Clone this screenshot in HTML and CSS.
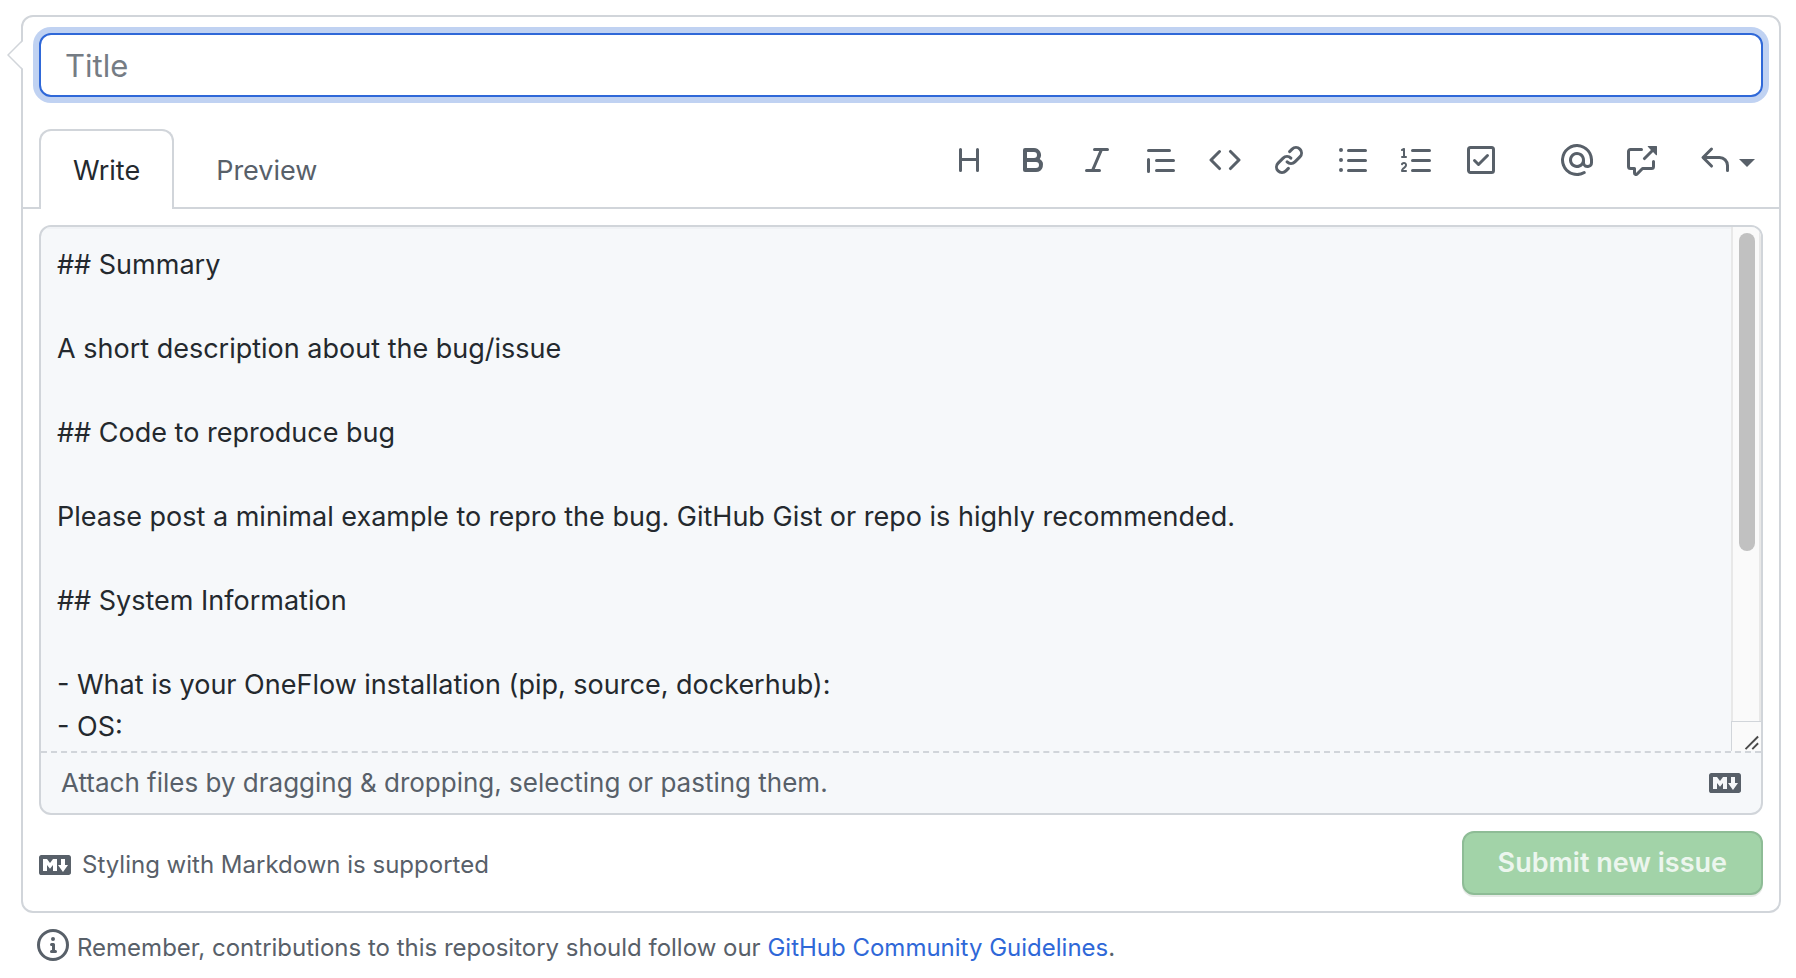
FILE: index.html
```html
<!DOCTYPE html>
<html lang="en">
<head>
<meta charset="utf-8">
<title>New issue</title>
<link rel="stylesheet" href="styles.css">
</head>
<body>
<main class="page">
  <form class="issue-box">
    <svg class="caret-left" viewBox="0 0 16 30" aria-hidden="true"><path class="caret-fill" d="M16 1 1 15l15 14z"/><path class="caret-line" d="M15.500 .5 1 15l14.500 14.500"/></svg>
    <input class="title-input" type="text" placeholder="Title" aria-label="Title">

    <div class="tab-bar">
      <div class="tabs" role="tablist">
        <button class="tab tab-selected" type="button" role="tab" aria-selected="true">Write</button>
        <button class="tab" type="button" role="tab" aria-selected="false">Preview</button>
      </div>
      <div class="toolbar" role="toolbar" aria-label="Formatting">
        <div class="tool-group">
          <button class="tool" type="button" aria-label="Heading"><svg class="icon" viewBox="0 0 16 16"><path d="M3.750 2a.75.75 0 01.75.75V7h7V2.750a.75.75 0 011.500 0v10.500a.75.75 0 01-1.500 0V8.500h-7v4.750a.75.75 0 01-1.500 0V2.750A.75.75 0 013.750 2z"/></svg></button>
          <button class="tool" type="button" aria-label="Bold"><svg class="icon" viewBox="0 0 16 16"><path fill-rule="evenodd" d="M4 2a1 1 0 00-1 1v10a1 1 0 001 1h5.500a3.500 3.500 0 001.852-6.470A3.500 3.500 0 008.500 2H4zm4.500 5a1.500 1.500 0 100-3H5v3h3.500zM5 9v3h4.500a1.500 1.500 0 000-3H5z"/></svg></button>
          <button class="tool" type="button" aria-label="Italic"><svg class="icon" viewBox="0 0 16 16"><path d="M6 2.750A.75.75 0 016.750 2h6.500a.75.75 0 010 1.500h-2.505l-3.858 9H9.250a.75.75 0 010 1.500h-6.500a.75.75 0 010-1.500h2.505l3.858-9H6.750A.75.75 0 016 2.750z"/></svg></button>
          <button class="tool" type="button" aria-label="Quote"><svg class="icon" viewBox="0 0 16 16"><path d="M1.750 2.500a.75.75 0 000 1.500h10.500a.75.75 0 000-1.500H1.750zm4 5a.75.75 0 000 1.500h8.500a.75.75 0 000-1.500h-8.500zm0 5a.75.75 0 000 1.500h8.500a.75.75 0 000-1.500h-8.500zM2.500 7.750a.75.75 0 00-1.500 0v6a.75.75 0 001.500 0v-6z"/></svg></button>
          <button class="tool" type="button" aria-label="Code"><svg class="icon" viewBox="0 0 16 16"><path d="M4.720 3.220a.75.75 0 011.060 1.060L2.060 8l3.720 3.720a.75.75 0 11-1.060 1.060L.47 8.530a.75.75 0 010-1.060l4.250-4.250zm6.560 0a.75.75 0 10-1.060 1.060L13.940 8l-3.720 3.720a.75.75 0 101.060 1.060l4.250-4.250a.75.75 0 000-1.060l-4.250-4.250z"/></svg></button>
          <button class="tool" type="button" aria-label="Link"><svg class="icon" viewBox="0 0 16 16"><path d="M7.775 3.275a.75.75 0 001.060 1.060l1.250-1.250a2 2 0 112.830 2.830l-2.500 2.500a2 2 0 01-2.830 0 .75.75 0 00-1.060 1.060 3.500 3.500 0 004.950 0l2.500-2.500a3.500 3.500 0 00-4.950-4.950l-1.250 1.250zm-4.690 9.640a2 2 0 010-2.830l2.500-2.500a2 2 0 012.830 0 .75.75 0 001.060-1.060 3.500 3.500 0 00-4.950 0l-2.500 2.500a3.500 3.500 0 004.950 4.950l1.250-1.250a.75.75 0 00-1.060-1.060l-1.250 1.250a2 2 0 01-2.830 0z"/></svg></button>
          <button class="tool" type="button" aria-label="Bulleted list"><svg class="icon" viewBox="0 0 16 16"><path d="M2 4a1 1 0 100-2 1 1 0 000 2zm3.750-1.500a.75.75 0 000 1.500h8.500a.75.75 0 000-1.500h-8.500zm0 5a.75.75 0 000 1.500h8.500a.75.75 0 000-1.500h-8.500zm0 5a.75.75 0 000 1.500h8.500a.75.75 0 000-1.500h-8.500zM3 8a1 1 0 11-2 0 1 1 0 012 0zm-1 6a1 1 0 100-2 1 1 0 000 2z"/></svg></button>
          <button class="tool" type="button" aria-label="Numbered list"><svg class="icon" viewBox="0 0 16 16"><path d="M2.003 2.500a.5.5 0 00-.723-.447l-1.003.5a.5.5 0 00.446.895l.28-.14V6H.5a.5.5 0 000 1h2.006a.5.5 0 100-1h-.503V2.500zM5 3.250a.75.75 0 01.75-.75h8.500a.75.75 0 010 1.500h-8.500A.75.75 0 015 3.250zm0 5a.75.75 0 01.75-.75h8.500a.75.75 0 010 1.500h-8.500A.75.75 0 015 8.250zm0 5a.75.75 0 01.75-.75h8.500a.75.75 0 010 1.500h-8.500a.75.75 0 01-.75-.75zM.924 10.320l.003-.004a.851.851 0 01.144-.153A.66.66 0 011.500 10c.195 0 .306.068.374.146a.57.57 0 01.128.376c0 .453-.269.682-.8 1.078l-.035.025C.692 11.980 0 12.495 0 13.500a.5.5 0 00.5.5h2.003a.5.5 0 000-1H1.146c.132-.197.351-.372.654-.597l.047-.035c.47-.35 1.156-.858 1.156-1.845 0-.365-.118-.744-.377-1.038-.268-.303-.658-.484-1.126-.484-.48 0-.84.202-1.068.392a1.858 1.858 0 00-.348.384l-.010.018a.5.5 0 00.851.525z"/></svg></button>
          <button class="tool" type="button" aria-label="Task list"><svg class="icon" viewBox="0 0 16 16"><path fill-rule="evenodd" d="M2.500 2.750a.25.25 0 01.25-.25h10.500a.25.25 0 01.25.25v10.500a.25.25 0 01-.25.25H2.750a.25.25 0 01-.25-.25V2.750zM2.750 1A1.750 1.750 0 001 2.750v10.500c0 .966.784 1.750 1.750 1.750h10.500A1.750 1.750 0 0015 13.250V2.750A1.750 1.750 0 0013.250 1H2.750zm9.030 5.280a.75.75 0 00-1.060-1.060L6.750 9.190 5.280 7.720a.75.75 0 00-1.060 1.060l2 2a.75.75 0 001.060 0l4.500-4.500z"/></svg></button>
        </div>
        <div class="tool-group">
          <button class="tool" type="button" aria-label="Mention"><svg class="icon" viewBox="0 0 16 16"><path fill-rule="evenodd" d="M4.750 2.370a6.500 6.500 0 006.500 11.260.75.75 0 01.75 1.298 8 8 0 113.994-7.273.754.754 0 01.006.095v1.500a2.750 2.750 0 01-5.072 1.475A4 4 0 1112 8v1.250a1.250 1.250 0 002.500 0V7.867a6.500 6.500 0 00-9.750-5.496V2.370zM10.500 8a2.500 2.500 0 10-5 0 2.500 2.500 0 005 0z"/></svg></button>
          <button class="tool" type="button" aria-label="Reference"><svg class="icon" viewBox="0 0 16 16"><path d="M16 1.250v4.146a.25.25 0 01-.427.177L14.030 4.030l-3.750 3.750a.75.75 0 11-1.060-1.060l3.750-3.750-1.543-1.543A.25.25 0 0111.604 1h4.146a.25.25 0 01.25.25zM2.750 3.500a.25.25 0 00-.25.25v7.500c0 .138.112.25.25.25h2a.75.75 0 01.75.75v2.190l2.720-2.720a.75.75 0 01.53-.22h4.500a.25.25 0 00.25-.25v-2.500a.75.75 0 111.500 0v2.500A1.750 1.750 0 0113.250 13H9.060l-2.573 2.573A1.457 1.457 0 014 14.543V13H2.750A1.750 1.750 0 011 11.250v-7.500C1 2.784 1.784 2 2.750 2h5.500a.75.75 0 010 1.500h-5.500z"/></svg></button>
        </div>
        <button class="tool tool-reply" type="button" aria-label="Saved replies"><svg class="icon" viewBox="0 0 16 16"><path d="M6.780 1.970a.75.75 0 010 1.060L3.810 6h6.440A4.750 4.750 0 0115 10.750v2.500a.75.75 0 01-1.500 0v-2.500a3.250 3.250 0 00-3.250-3.250H3.810l2.970 2.970a.75.75 0 11-1.060 1.060L1.470 7.280a.75.75 0 010-1.060l4.250-4.250a.75.75 0 011.060 0z"/></svg><span class="dropdown-caret"></span></button>
      </div>
    </div>

    <div class="editor">
      <div class="editor-main">
        <textarea class="editor-text" rows="12" aria-label="Issue description">## Summary

A short description about the bug/issue

## Code to reproduce bug

Please post a minimal example to repro the bug. GitHub Gist or repo is highly recommended.

## System Information

- What is your OneFlow installation (pip, source, dockerhub):
- OS:</textarea>
        <div class="scrollbar" aria-hidden="true">
          <div class="scroll-track"><div class="scroll-thumb"></div></div>
          <svg class="resizer" viewBox="0 0 30 30"><path d="M14 28 27 15M21 28l6-6"/></svg>
        </div>
      </div>
      <div class="attach">
        <span>Attach files by dragging &amp; dropping, selecting or pasting them.</span>
        <svg class="md-icon" viewBox="0 3 16 10" role="img" aria-label="Markdown"><path d="M14.850 3H1.150C.52 3 0 3.520 0 4.150v7.690C0 12.480.52 13 1.150 13h13.690c.64 0 1.150-.52 1.150-1.150v-7.700C16 3.520 15.480 3 14.850 3zM9 11H7V8L5.500 9.920 4 8v3H2V5h2l1.500 2L7 5h2v6zm2.990.5L9.500 8H11V5h2v3h1.500l-2.510 3.500z"/></svg>
      </div>
    </div>

    <div class="actions">
      <a class="md-help" href="#markdown"><svg class="md-icon" viewBox="0 3 16 10" aria-hidden="true"><path d="M14.850 3H1.150C.52 3 0 3.520 0 4.150v7.690C0 12.480.52 13 1.150 13h13.690c.64 0 1.150-.52 1.150-1.150v-7.700C16 3.520 15.480 3 14.850 3zM9 11H7V8L5.500 9.920 4 8v3H2V5h2l1.500 2L7 5h2v6zm2.990.5L9.500 8H11V5h2v3h1.500l-2.510 3.500z"/></svg><span>Styling with Markdown is supported</span></a>
      <button class="submit" type="submit" disabled>Submit new issue</button>
    </div>
  </form>

  <div class="note">
    <svg class="icon" viewBox="0 0 16 16" aria-hidden="true"><path fill-rule="evenodd" d="M8 1.500a6.500 6.500 0 100 13 6.500 6.500 0 000-13zM0 8a8 8 0 1116 0A8 8 0 010 8zm6.500-.25A.75.75 0 017.250 7h1a.75.75 0 01.75.75v2.750h.25a.75.75 0 010 1.500h-2a.75.75 0 010-1.500h.25v-2h-.25a.75.75 0 01-.75-.75zM8 6a1 1 0 100-2 1 1 0 000 2z"/></svg>
    <p class="note-text">Remember, contributions to this repository should follow our <a class="link" href="#guidelines">GitHub Community Guidelines</a>.</p>
  </div>
</main>
</body>
</html>
```
FILE: styles.css
```css
* { box-sizing: border-box; }

:root {
  --border: #d1d5da;
  --muted: #586069;
  --text: #24292e;
  --canvas: #f6f8fa;
}

body {
  margin: 0;
  background: #fff;
  color: var(--text);
  font-family: Inter, "Liberation Sans", sans-serif;
  font-size: 27px;
  line-height: 42px;
}

button, input, textarea { font: inherit; }

.page { padding: 15px 15px 0 21px; }

.issue-box {
  position: relative;
  border: 2px solid var(--border);
  border-radius: 12px;
  padding: 16px 0;
}

.caret-left {
  position: absolute;
  left: -16px;
  top: 23px;
  width: 16px;
  height: 30px;
}
.caret-fill { fill: #fff; }
.caret-line { fill: none; stroke: var(--border); stroke-width: 1.5; }

.title-input {
  display: block;
  width: calc(100% - 32px);
  height: 64px;
  margin: 0 16px;
  padding: 0 24px;
  border: 2px solid #2f68d8;
  border-radius: 12px;
  outline: none;
  background: #fff;
  box-shadow: 0 0 0 6px #c0d2f2;
  font-size: 31px;
}
.title-input::placeholder { color: #757c84; opacity: 1; }

.tab-bar {
  display: flex;
  justify-content: space-between;
  align-items: flex-start;
  margin-top: 32px;
  padding: 0 16px;
  border-bottom: 2px solid var(--border);
}
.tabs { display: flex; gap: 8px; margin-bottom: -2px; }
.tab {
  height: 80px;
  padding: 2px 32px 0;
  border: 2px solid transparent;
  border-bottom: 0;
  border-radius: 12px 12px 0 0;
  background: none;
  color: var(--muted);
}
.tab-selected {
  border-color: var(--border);
  background: #fff;
  color: var(--text);
}

.toolbar { display: flex; gap: 32px; padding-top: 15px; padding-right: 8px; }
.tool-group { display: flex; gap: 32px; }
.tool-group + .tool-group { margin-left: 32px; }
.tool {
  display: flex;
  align-items: center;
  padding: 0;
  border: 0;
  background: none;
}
.tool-reply { gap: 8px; margin-left: 10px; }
.icon { display: block; flex: none; width: 32px; height: 32px; fill: var(--muted); }
.dropdown-caret {
  margin-top: 6px;
  border: 8px solid transparent;
  border-top-color: var(--muted);
  border-bottom: 0;
}

.editor {
  margin: 16px 16px 0;
  border: 2px solid var(--border);
  border-radius: 12px;
  background: var(--canvas);
  overflow: hidden;
}
.editor-main {
  display: flex;
  border-bottom: 2px dashed var(--border);
  box-shadow: inset 0 2px 0 #f0f2f5;
}
.editor-text {
  display: block;
  flex: 1;
  height: 524px;
  padding: 17px 16px 0;
  border: 0;
  outline: none;
  resize: none;
  background: none;
  color: var(--text);
  overflow: hidden;
}
.scrollbar {
  display: flex;
  flex-direction: column;
  width: 30px;
  background: #fafafa;
}
.scroll-track {
  flex: 1;
  padding: 6px;
  border: solid #e8e8e8;
  border-width: 0 2px;
}
.scroll-thumb {
  width: 16px;
  height: 66%;
  border-radius: 8px;
  background: #c1c1c1;
}
.resizer {
  width: 30px;
  height: 30px;
  border: solid var(--border);
  border-width: 1px 0 0 1px;
  fill: none;
  stroke: #4a4a4a;
  stroke-width: 2;
}

.attach {
  display: flex;
  justify-content: space-between;
  align-items: center;
  height: 60px;
  padding: 0 20px;
  color: var(--muted);
  font-size: 26px;
}
.md-icon { display: block; flex: none; width: 32px; height: 20px; fill: var(--muted); }

.actions {
  display: flex;
  justify-content: space-between;
  align-items: center;
  margin: 16px 16px 0;
}
.md-help {
  display: flex;
  align-items: center;
  gap: 11px;
  padding-top: 3px;
  color: var(--muted);
  font-size: 24px;
  text-decoration: none;
}
.submit {
  height: 64px;
  padding: 0 34px;
  border: 2px solid #8ebc96;
  border-radius: 12px;
  background: #a2d3a8;
  box-shadow: 0 2px 0 #e8ebe8;
  color: #ecf6ee;
  font-weight: 600;
}

.note {
  display: flex;
  gap: 8px;
  padding: 16px 16px 0;
  color: var(--muted);
  font-size: 24px;
}
.note-text { margin: 0; line-height: 38px; }
.link { color: #2f68d8; text-decoration: none; }
```
